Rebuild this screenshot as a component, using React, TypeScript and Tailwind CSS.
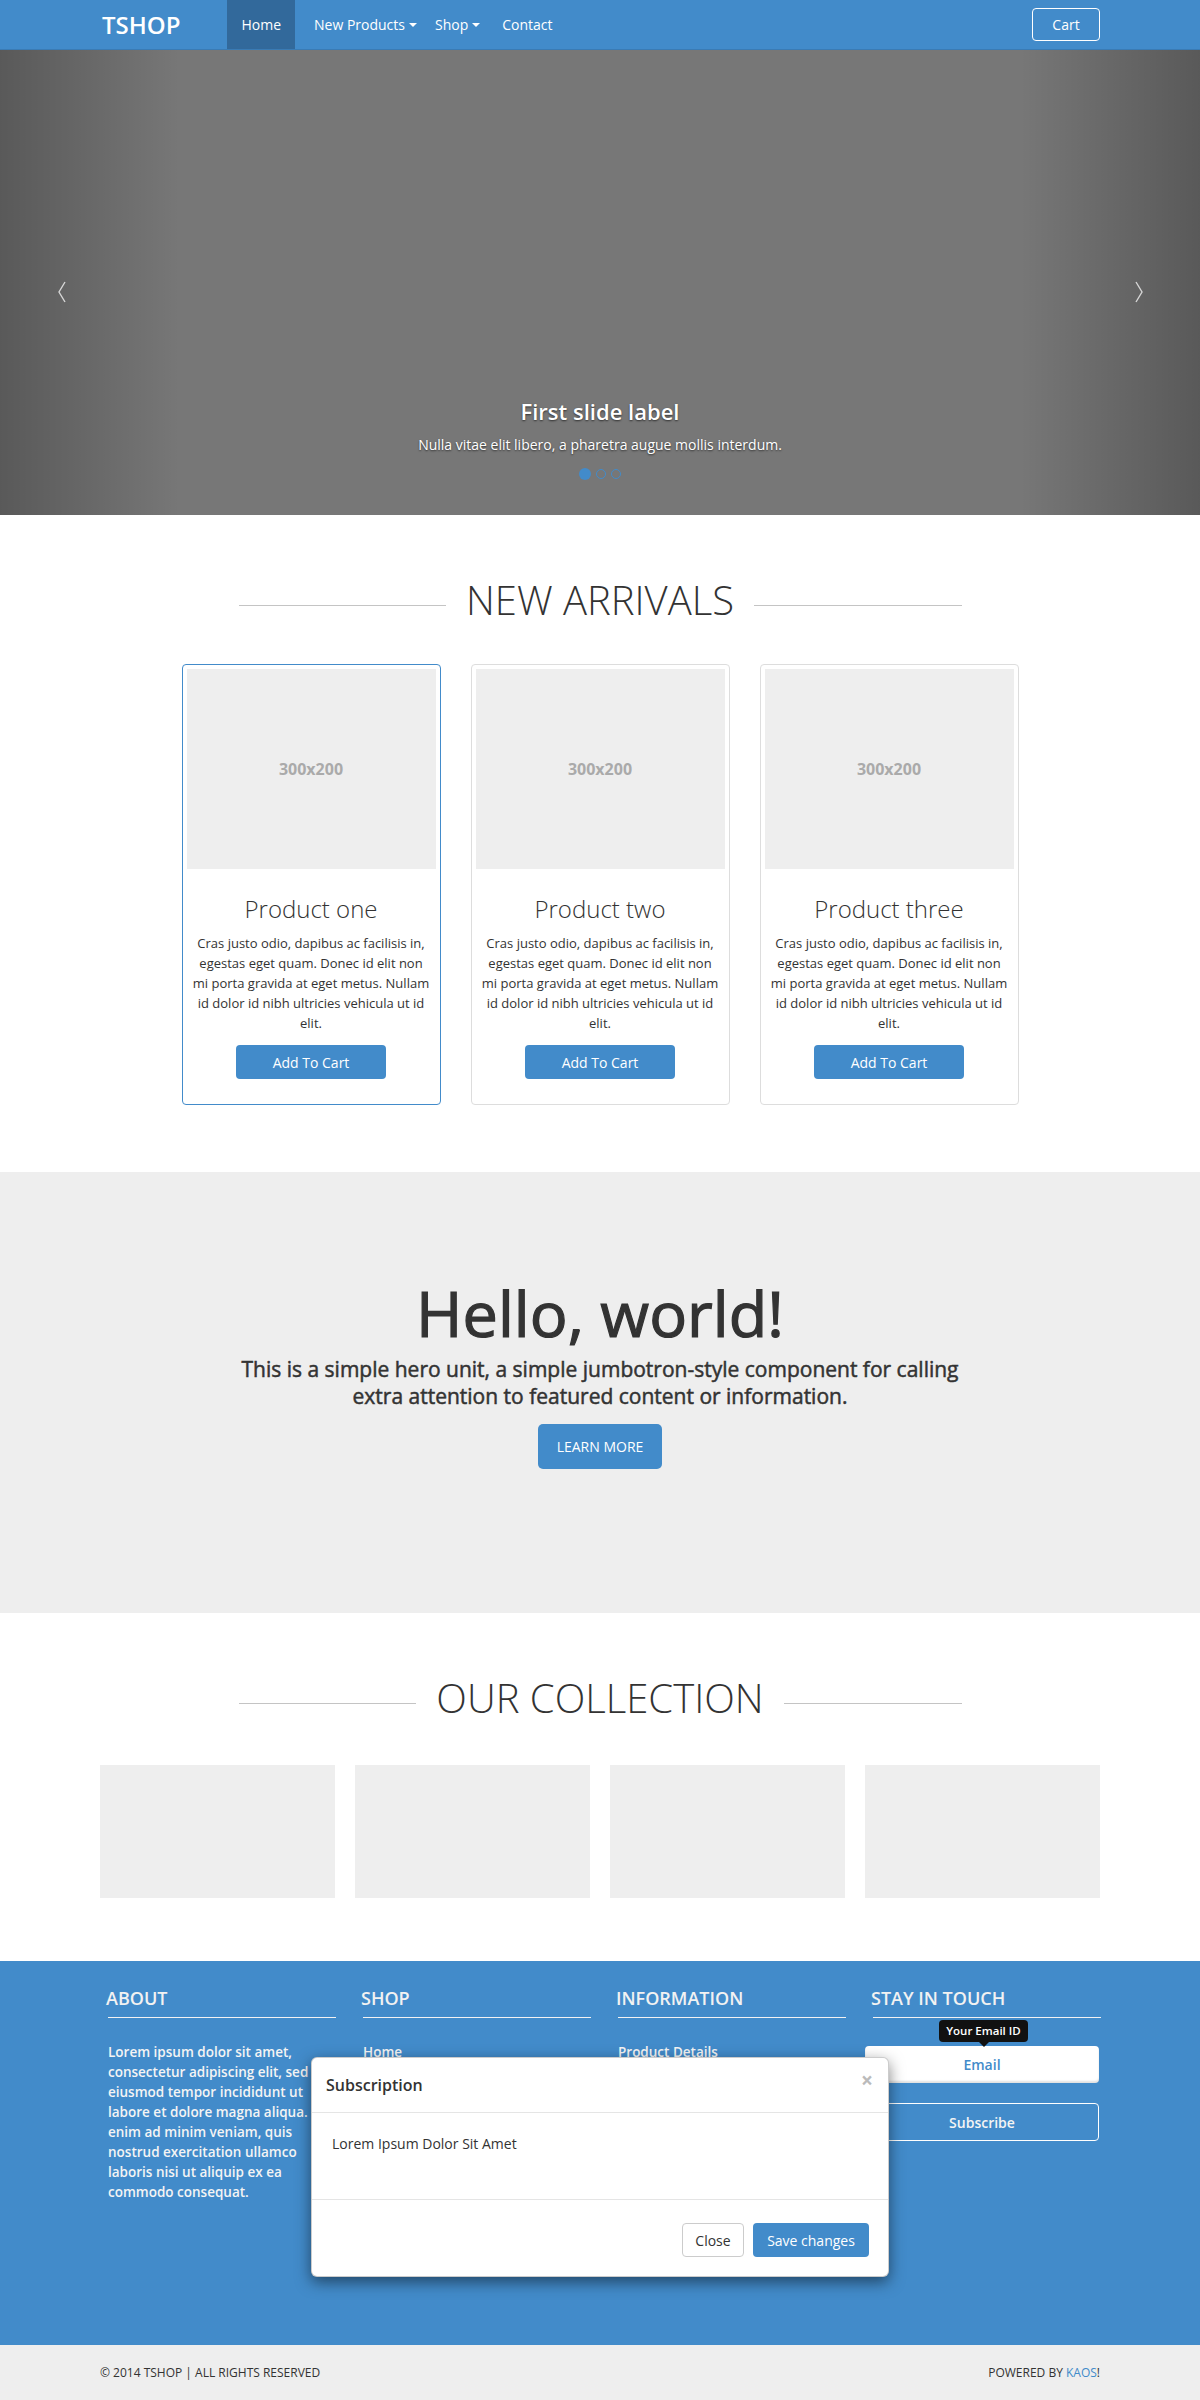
import React from "react";

const products = [
  { name: "Product one", active: true },
  { name: "Product two", active: false },
  { name: "Product three", active: false },
];

const desc =
  "Cras justo odio, dapibus ac facilisis in, egestas eget quam. Donec id elit non mi porta gravida at eget metus. Nullam id dolor id nibh ultricies vehicula ut id elit.";

const Caret = () => (
  <span className="ml-[4px] inline-block h-0 w-0 border-x-[4px] border-t-[4px] border-x-transparent border-t-white align-middle" />
);

const SectionTitle = ({ children }: { children: React.ReactNode }) => (
  <div className="mx-auto flex w-[723px] items-center">
    <div className="mt-[10px] h-px flex-1 bg-[#c4c4c4]" />
    <h2 className="px-[20px] text-[40px] font-light leading-[44px] text-[#333]">
      {children}
    </h2>
    <div className="mt-[10px] h-px flex-1 bg-[#c4c4c4]" />
  </div>
);

const Navbar = () => (
  <nav className="h-[50px] border-b border-[#3a7bb4] bg-[#428bca] text-white">
    <div className="mx-auto flex h-full w-[1000px] items-center">
      <a className="pl-[2px] text-[24px] font-semibold leading-none">TSHOP</a>
      <ul className="ml-[47px] flex h-full items-center text-[14px]">
        <li className="flex h-full items-center bg-[#32699b] px-[14px]">Home</li>
        <li className="ml-[19px] flex items-center">
          New Products
          <Caret />
        </li>
        <li className="ml-[18px] flex items-center">
          Shop
          <Caret />
        </li>
        <li className="ml-[22px]">Contact</li>
      </ul>
      <button className="ml-auto h-[33px] w-[68px] rounded-[4px] border border-white text-[14px]">
        Cart
      </button>
    </div>
  </nav>
);

const Carousel = () => (
  <div className="relative h-[465px] overflow-hidden bg-[#777]">
    <div className="absolute inset-y-0 left-0 flex w-[15%] items-center bg-gradient-to-r from-[rgba(0,0,0,0.25)] to-transparent">
      <svg className="ml-[57px] mt-[18px]" width="10" height="22" viewBox="0 0 10 22">
        <polyline points="8,1 2,11 8,21" fill="none" stroke="#d6d6d6" strokeWidth="1.4" />
      </svg>
    </div>
    <div className="absolute inset-y-0 right-0 flex w-[15%] items-center justify-end bg-gradient-to-l from-[rgba(0,0,0,0.25)] to-transparent">
      <svg className="mr-[56px] mt-[18px]" width="10" height="22" viewBox="0 0 10 22">
        <polyline points="2,1 8,11 2,21" fill="none" stroke="#d6d6d6" strokeWidth="1.4" />
      </svg>
    </div>
    <div className="absolute inset-x-0 top-[346px] text-center text-white [text-shadow:0_1px_2px_rgba(0,0,0,0.6)]">
      <h3 className="text-[22px] font-semibold leading-[30px]">First slide label</h3>
      <p className="mt-[9px] text-[14px] leading-[20px]">
        Nulla vitae elit libero, a pharetra augue mollis interdum.
      </p>
    </div>
    <div className="absolute inset-x-0 top-[418px] flex items-center justify-center gap-[5px]">
      <span className="h-[12px] w-[12px] rounded-full bg-[#428bca]" />
      <span className="h-[10px] w-[10px] rounded-full border border-[#428bca]" />
      <span className="h-[10px] w-[10px] rounded-full border border-[#428bca]" />
    </div>
  </div>
);

const ProductCard = ({ name, active }: { name: string; active: boolean }) => (
  <div
    className={
      active
        ? "w-[259px] rounded-[4px] border border-[#428bca] bg-white p-[4px]"
        : "w-[259px] rounded-[4px] border border-[#ddd] bg-white p-[4px]"
    }
  >
    <div className="flex h-[200px] items-center justify-center bg-[#eee] text-[16px] font-bold text-[#aaa]">
      300x200
    </div>
    <div className="px-[4px] pb-[21px] pt-[27px] text-center">
      <h3 className="text-[24px] font-light leading-[26px] text-[#333]">{name}</h3>
      <p className="mt-[11px] text-[13px] leading-[20px] text-[#333]">{desc}</p>
      <button className="mt-[12px] h-[34px] w-[150px] rounded-[4px] bg-[#428bca] text-[14px] text-white">
        Add To Cart
      </button>
    </div>
  </div>
);

const NewArrivals = () => (
  <section className="h-[657px] bg-white pt-[63px]">
    <SectionTitle>NEW ARRIVALS</SectionTitle>
    <div className="mt-[42px] flex justify-center gap-[30px]">
      {products.map((p) => (
        <ProductCard key={p.name} name={p.name} active={p.active} />
      ))}
    </div>
  </section>
);

const Jumbotron = () => (
  <section className="h-[441px] bg-[#eee] pt-[106px] text-center text-[#333]">
    <h1 className="text-[63px] font-normal leading-[69px] [-webkit-text-stroke:1.2px_#333]">
      Hello, world!
    </h1>
    <p className="mx-auto mt-[9px] w-[740px] text-[21px] font-normal leading-[27px] [-webkit-text-stroke:0.5px_#333]">
      This is a simple hero unit, a simple jumbotron-style component for calling extra attention
      to featured content or information.
    </p>
    <button className="mt-[14px] h-[45px] w-[124px] rounded-[5px] bg-[#428bca] text-[14px] text-white">
      LEARN MORE
    </button>
  </section>
);

const Collection = () => (
  <section className="h-[348px] bg-white pt-[63px]">
    <SectionTitle>OUR COLLECTION</SectionTitle>
    <div className="mx-auto mt-[45px] grid w-[1000px] grid-cols-4 gap-[20px]">
      {[1, 2, 3, 4].map((i) => (
        <div key={i} className="h-[133px] bg-[#eee]" />
      ))}
    </div>
  </section>
);

const FooterHeading = ({ children }: { children: React.ReactNode }) => (
  <div>
    <h4 className="-ml-[2px] text-[18px] font-semibold leading-[25px] text-[#f2f2f2]">
      {children}
    </h4>
    <div className="mt-[6px] h-px bg-[#f2f2f2]" />
  </div>
);

const Footer = () => (
  <footer className="h-[384px] bg-[#428bca] pt-[25px] text-white">
    <div className="mx-auto grid w-[1000px] grid-cols-[228px_228px_228px_228px] gap-[27px] pl-[8px]">
      <div>
        <FooterHeading>ABOUT</FooterHeading>
        <p className="mt-[24px] text-[13.5px] font-semibold leading-[20px] text-[#f4f4f4]">
          Lorem ipsum dolor sit amet, consectetur adipiscing elit, sed do eiusmod tempor incididunt
          ut labore et dolore magna aliqua. Ut enim ad minim veniam, quis nostrud exercitation
          ullamco laboris nisi ut aliquip ex ea commodo consequat.
        </p>
      </div>
      <div>
        <FooterHeading>SHOP</FooterHeading>
        <ul className="mt-[24px] text-[13.5px] font-semibold leading-[20px] text-[#f4f4f4]">
          <li>Home</li>
          <li>New Products</li>
          <li>Shop</li>
          <li>Contact</li>
        </ul>
      </div>
      <div>
        <FooterHeading>INFORMATION</FooterHeading>
        <ul className="mt-[24px] text-[13.5px] font-semibold leading-[20px] text-[#f4f4f4]">
          <li>Product Details</li>
          <li>Delivery</li>
          <li>Returns</li>
          <li>Privacy Policy</li>
        </ul>
      </div>
      <div>
        <FooterHeading>STAY IN TOUCH</FooterHeading>
        <div className="relative -ml-[8px] mt-[28px] w-[234px]">
          <div className="absolute -top-[26px] left-[74px] flex flex-col items-center">
            <div className="flex h-[22px] w-[89px] items-center justify-center rounded-[4px] bg-[#111] text-[11.5px] font-semibold text-white">
              Your Email ID
            </div>
            <div className="h-0 w-0 border-x-[5px] border-t-[5px] border-x-transparent border-t-[#111]" />
          </div>
          <div className="flex h-[37px] items-center justify-center rounded-[4px] bg-white text-[14px] font-semibold text-[#428bca] shadow-[inset_0_-2px_2px_rgba(0,0,0,0.12)]">
            Email
          </div>
          <button className="mt-[20px] h-[38px] w-full rounded-[4px] border border-white text-[14px] font-semibold text-[#f4f4f4]">
            Subscribe
          </button>
        </div>
      </div>
    </div>
  </footer>
);

const BottomBar = () => (
  <div className="h-[55px] bg-[#eee] text-[12px] text-[#333]">
    <div className="mx-auto flex h-full w-[1000px] items-center justify-between">
      <span>© 2014 TSHOP | ALL RIGHTS RESERVED</span>
      <span>
        POWERED BY <span className="text-[#428bca]">KAOS</span>!
      </span>
    </div>
  </div>
);

const Modal = () => (
  <div className="absolute left-[311px] top-[2057px] w-[578px] rounded-[6px] border border-[rgba(0,0,0,0.2)] bg-white text-[#333] shadow-[0_5px_15px_rgba(0,0,0,0.5)]">
    <div className="flex h-[55px] items-center justify-between border-b border-[#e5e5e5] pl-[14px] pr-[15px]">
      <h4 className="text-[16px] font-semibold">Subscription</h4>
      <span className="mb-[10px] text-[21px] font-bold leading-none text-[#bbb]">×</span>
    </div>
    <div className="h-[86px] px-[20px] pt-[21px] text-[14px] leading-[20px]">
      Lorem Ipsum Dolor Sit Amet
    </div>
    <div className="flex justify-end gap-[9px] border-t border-[#e5e5e5] pb-[19px] pr-[19px] pt-[23px]">
      <button className="h-[34px] w-[62px] rounded-[4px] border border-[#ccc] bg-white text-[14px] text-[#333]">
        Close
      </button>
      <button className="h-[34px] w-[116px] rounded-[4px] bg-[#428bca] text-[14px] text-white">
        Save changes
      </button>
    </div>
  </div>
);

export default function App() {
  return (
    <div className="relative w-[1200px] font-['Open_Sans',sans-serif]">
      <Navbar />
      <Carousel />
      <NewArrivals />
      <Jumbotron />
      <Collection />
      <Footer />
      <BottomBar />
      <Modal />
    </div>
  );
}
